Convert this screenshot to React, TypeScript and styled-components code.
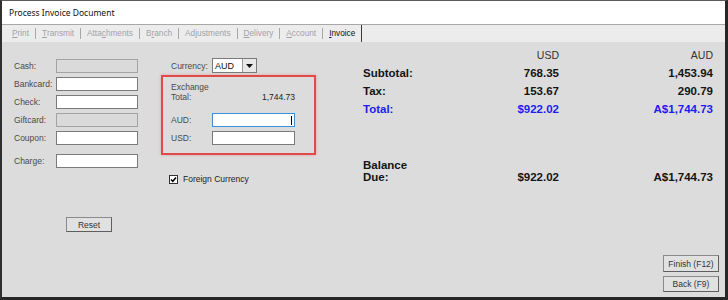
import React from "react";
import styled, { createGlobalStyle } from "styled-components";

const GlobalStyle = createGlobalStyle`
  body {
    margin: 0;
    background: #ffffff;
  }
  * {
    box-sizing: border-box;
  }
`;

const Window = styled.div`
  width: 728px;
  height: 300px;
  display: flex;
  flex-direction: column;
  overflow: hidden;

  border-top: 1px solid #5a5a5a;
  border-left: 2px solid #2f2f2f;
  border-right: 3px solid #262626;
  border-bottom: 3px solid #262626;
  background: #dcdcdc;
  font-family: "Liberation Sans", Arial, sans-serif;
`;

const TitleBar = styled.div`
  height: 24px;
  display: flex;
  align-items: center;
  padding-left: 7px;

  background: #ffffff;
  border-bottom: 1px solid #a8a8a8;
  font-family: "Noto Sans", "Liberation Sans", sans-serif;
  font-size: 8.5px;
  color: #111111;
`;

const TabBar = styled.div`
  height: 17px;
  display: flex;
  align-items: stretch;
  padding-left: 5px;

  background: #ececec;
  font-size: 8.25px;
`;

const Tab = styled.span<{ $active?: boolean }>`
  display: flex;
  align-items: center;
  padding: 0 5px;
  color: ${(p) => (p.$active ? "#111111" : "#a3a3a3")};
`;

const Sep = styled.span<{ $strong?: boolean }>`
  align-self: ${(p) => (p.$strong ? "stretch" : "center")};
  width: 1px;
  height: ${(p) => (p.$strong ? "auto" : "11px")};
  margin: 0 1px;
  background: ${(p) => (p.$strong ? "#3a3a3a" : "#a8a8a8")};
`;

const Key = styled.span`
  text-decoration: underline;
`;

const Body = styled.div`
  flex: 1;
  display: flex;
  padding: 0 6px 5px 12px;
`;

const LeftCol = styled.div`
  width: 124px;
  display: flex;
  flex-direction: column;
  padding-top: 17px;
`;

const FieldList = styled.div`
  display: flex;
  flex-direction: column;
  gap: 4px;
`;

const FieldRow = styled.div<{ $extra?: number }>`
  display: grid;
  grid-template-columns: 42px 82px;
  align-items: center;
  margin-top: ${(p) => p.$extra ?? 0}px;
`;

const Label = styled.span`
  font-size: 8.5px;
  color: #4a4a4a;
  white-space: nowrap;
`;

const TextBox = styled.div<{ $disabled?: boolean; $focused?: boolean }>`
  height: 14px;
  display: flex;
  align-items: center;
  justify-content: flex-end;
  padding-right: 2px;

  background: ${(p) => (p.$disabled ? "#dadada" : "#ffffff")};
  border: 1px solid ${(p) => (p.$focused ? "#3c8fd8" : p.$disabled ? "#a3a3a3" : "#7a7a7a")};
`;

const Caret = styled.span`
  width: 1px;
  height: 9px;
  background: #000000;
`;

const Button = styled.div<{ $w: number; $h: number }>`
  width: ${(p) => p.$w}px;
  height: ${(p) => p.$h}px;
  display: flex;
  align-items: center;
  justify-content: center;

  background: #e1e1e1;
  border: 1px solid #8a8a8a;
  border-right-color: #5e5e5e;
  border-bottom-color: #5e5e5e;
  font-size: 8.5px;
  color: #333333;
`;

const ResetButton = styled(Button)`
  margin: 49px 0 0 52px;
`;

const MidCol = styled.div`
  width: 155px;
  margin-left: 23px;
  display: flex;
  flex-direction: column;
  padding-top: 16px;
`;

const CurrencyRow = styled.div`
  display: grid;
  grid-template-columns: 41px 45px;
  align-items: center;
  padding-left: 10px;
`;

const Select = styled.div`
  height: 15px;
  display: flex;
  align-items: stretch;

  background: #ffffff;
  border: 1px solid #7a7a7a;
  font-size: 9px;
  color: #111111;
`;

const SelectValue = styled.span`
  flex: 1;
  display: flex;
  align-items: center;
  padding-left: 2px;
`;

const DropButton = styled.span`
  width: 14px;
  display: flex;
  align-items: center;
  justify-content: center;

  background: #e8e8e8;
  border-left: 1px solid #9a9a9a;
`;

const ExchangeBox = styled.div`
  margin-top: 2px;
  padding: 5px 19px 8px 8px;

  border: 2px solid #e24a4a;
  box-shadow: 0 0 3px rgba(226, 74, 74, 0.35);
`;

const ExchangeHead = styled.div`
  display: flex;
  justify-content: space-between;
  align-items: flex-end;
  line-height: 10px;
  font-size: 8.5px;
  color: #4a4a4a;
`;

const ExchangeValue = styled.span`
  color: #222222;
`;

const ExchangeFields = styled.div`
  display: flex;
  flex-direction: column;
  gap: 4px;
  margin-top: 11px;
`;

const ExchangeRow = styled.div`
  display: grid;
  grid-template-columns: 41px 83px;
  align-items: center;
`;

const CheckRow = styled.div`
  display: flex;
  align-items: center;
  gap: 5px;
  margin-top: 19px;
  padding-left: 8px;
  font-size: 8.5px;
  color: #222222;
`;

const CheckBox = styled.span`
  width: 9px;
  height: 9px;
  display: flex;
  background: #ffffff;
  border: 1px solid #333333;
`;

const RightCol = styled.div`
  flex: 1;
  margin-left: 47px;
  display: flex;
  flex-direction: column;
  padding-top: 4px;
`;

const Summary = styled.div`
  display: grid;
  grid-template-columns: 120px 76px 154px;
  grid-auto-rows: 18px;
  align-items: center;
`;

const Head = styled.span`
  text-align: right;
  font-size: 10.5px;
  color: #333333;
`;

const Cell = styled.span<{ $blue?: boolean; $right?: boolean }>`
  text-align: ${(p) => (p.$right ? "right" : "left")};
  font-size: 11.5px;
  font-weight: bold;
  color: ${(p) => (p.$blue ? "#1c1cf0" : "#141414")};
`;

const Balance = styled.div`
  display: grid;
  grid-template-columns: 120px 76px 154px;
  align-items: end;
  margin-top: 41px;
  line-height: 12px;
`;

const ButtonStack = styled.div`
  margin-top: auto;
  align-self: flex-end;
  display: flex;
  flex-direction: column;
  gap: 4px;
`;

const tabs: { pre: string; key: string; post: string }[] = [
  { pre: "", key: "P", post: "rint" },
  { pre: "", key: "T", post: "ransmit" },
  { pre: "Atta", key: "c", post: "hments" },
  { pre: "B", key: "r", post: "anch" },
  { pre: "Ad", key: "j", post: "ustments" },
  { pre: "", key: "D", post: "elivery" },
  { pre: "", key: "A", post: "ccount" },
];

const fields = [
  { label: "Cash:", disabled: true },
  { label: "Bankcard:" },
  { label: "Check:" },
  { label: "Giftcard:", disabled: true },
  { label: "Coupon:" },
  { label: "Charge:", extra: 5 },
];

const rows = [
  { label: "Subtotal:", usd: "768.35", aud: "1,453.94" },
  { label: "Tax:", usd: "153.67", aud: "290.79" },
  { label: "Total:", usd: "$922.02", aud: "A$1,744.73", blue: true },
];

const App = () => (
  <>
    <GlobalStyle />
    <Window>
      <TitleBar>Process Invoice Document</TitleBar>
      <TabBar>
        {tabs.map((t) => (
          <React.Fragment key={t.post}>
            <Tab>
              {t.pre}
              <Key>{t.key}</Key>
              {t.post}
            </Tab>
            <Sep />
          </React.Fragment>
        ))}
        <Tab $active>
          <Key>I</Key>nvoice
        </Tab>
        <Sep $strong />
      </TabBar>
      <Body>
        <LeftCol>
          <FieldList>
            {fields.map((f) => (
              <FieldRow key={f.label} $extra={f.extra}>
                <Label>{f.label}</Label>
                <TextBox $disabled={f.disabled} />
              </FieldRow>
            ))}
          </FieldList>
          <ResetButton $w={46} $h={15}>
            Reset
          </ResetButton>
        </LeftCol>

        <MidCol>
          <CurrencyRow>
            <Label>Currency:</Label>
            <Select>
              <SelectValue>AUD</SelectValue>
              <DropButton>
                <svg width="7" height="4" viewBox="0 0 7 4">
                  <polygon points="0,0 7,0 3.5,4" fill="#111" />
                </svg>
              </DropButton>
            </Select>
          </CurrencyRow>
          <ExchangeBox>
            <ExchangeHead>
              <span>
                Exchange
                <br />
                Total:
              </span>
              <ExchangeValue>1,744.73</ExchangeValue>
            </ExchangeHead>
            <ExchangeFields>
              <ExchangeRow>
                <Label>AUD:</Label>
                <TextBox $focused>
                  <Caret />
                </TextBox>
              </ExchangeRow>
              <ExchangeRow>
                <Label>USD:</Label>
                <TextBox />
              </ExchangeRow>
            </ExchangeFields>
          </ExchangeBox>
          <CheckRow>
            <CheckBox>
              <svg width="7" height="7" viewBox="0 0 7 7">
                <path d="M1 3.5 L2.8 5.3 L6 1.5" stroke="#000" strokeWidth="1.5" fill="none" />
              </svg>
            </CheckBox>
            Foreign Currency
          </CheckRow>
        </MidCol>

        <RightCol>
          <Summary>
            <span />
            <Head>USD</Head>
            <Head>AUD</Head>
            {rows.map((r) => (
              <React.Fragment key={r.label}>
                <Cell $blue={r.blue}>{r.label}</Cell>
                <Cell $blue={r.blue} $right>
                  {r.usd}
                </Cell>
                <Cell $blue={r.blue} $right>
                  {r.aud}
                </Cell>
              </React.Fragment>
            ))}
          </Summary>
          <Balance>
            <Cell>
              Balance
              <br />
              Due:
            </Cell>
            <Cell $right>$922.02</Cell>
            <Cell $right>A$1,744.73</Cell>
          </Balance>
          <ButtonStack>
            <Button $w={56} $h={17}>
              Finish (F12)
            </Button>
            <Button $w={56} $h={16}>
              Back (F9)
            </Button>
          </ButtonStack>
        </RightCol>
      </Body>
    </Window>
  </>
);

export default App;
